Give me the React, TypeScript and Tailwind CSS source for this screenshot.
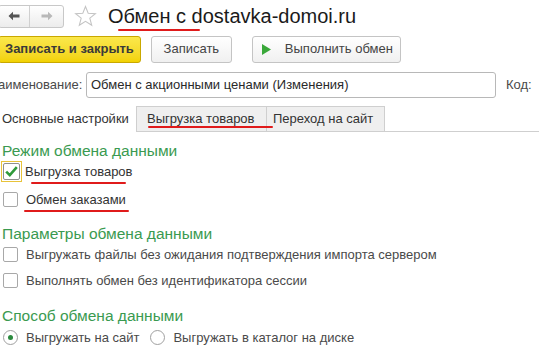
import React from 'react';

const font = { fontFamily: '"Liberation Sans", Arial, sans-serif' };

function Check({ checked }: { checked?: boolean }) {
  if (checked) {
    return (
      <span className="flex h-[21px] w-[21px] items-center justify-center border border-[#e8c33a] bg-white">
        <svg width="17" height="17" viewBox="0 0 17 17">
          <rect x="0.5" y="0.5" width="16" height="16" rx="1.5" fill="white" stroke="#8f8f8f" />
          <path d="M3.2 8.6 L6.8 12.2 L13.8 4.2" fill="none" stroke="#2f9a3a" strokeWidth="2.6" />
        </svg>
      </span>
    );
  }
  return <span className="block h-[15px] w-[15px] rounded-[2px] border border-[#a8a8a8] bg-white" />;
}

function Radio({ on }: { on?: boolean }) {
  return (
    <span className="flex h-[15px] w-[15px] items-center justify-center rounded-full border border-[#a0a0a0] bg-white">
      {on && <span className="h-[5px] w-[5px] rounded-full bg-[#2b8a3e]" />}
    </span>
  );
}

export default function App() {
  return (
    <div className="h-[350px] w-[539px] overflow-hidden bg-white text-[13px] text-[#4a4a4a]" style={font}>
      {/* header */}
      <div className="flex h-[32px] items-center">
        <div className="ml-[-2px] flex h-[23px] items-stretch rounded-[3px] border border-[#c8c8c8] bg-gradient-to-b from-white to-[#ececec]">
          <span className="flex w-[31px] items-center justify-center border-r border-[#d0d0d0]">
            <svg width="12" height="10" viewBox="0 0 12 10">
              <path d="M0.5 5 L5 0.8 V3.6 H11.5 V6.4 H5 V9.2 Z" fill="#555" />
            </svg>
          </span>
          <span className="flex w-[33px] items-center justify-center">
            <svg width="12" height="10" viewBox="0 0 12 10">
              <path d="M11.5 5 L7 0.8 V3.6 H0.5 V6.4 H7 V9.2 Z" fill="#b8b8b8" />
            </svg>
          </span>
        </div>
        <svg className="ml-[10px]" width="23" height="22" viewBox="0 0 24 23">
          <path
            d="M12 1.5 L14.8 8.6 L22.4 9 L16.5 13.8 L18.5 21.2 L12 17 L5.5 21.2 L7.5 13.8 L1.6 9 L9.2 8.6 Z"
            fill="white"
            stroke="#c4c4c4"
            strokeWidth="1.1"
          />
        </svg>
        <div className="relative ml-[11px] text-[20px] leading-none text-[#1a1a1a]">
          Обмен с dostavka-domoi.ru
          <span className="absolute left-[10px] top-[23px] h-[2px] w-[82px] rounded bg-[#e01b1b]" />
        </div>
      </div>

      {/* command bar */}
      <div className="mt-[3px] flex h-[28px] items-center">
        <button className="ml-[-2px] h-[27px] rounded-[3px] border border-[#c9a800] bg-gradient-to-b from-[#fbe84a] to-[#f2d200] px-[6px] text-[13px] font-bold text-[#3a3a3a]">
          Записать и закрыть
        </button>
        <button className="ml-[10px] h-[27px] w-[81px] rounded-[3px] border border-[#c4c4c4] bg-gradient-to-b from-white to-[#f0f0f0] text-[13px] text-[#444]">
          Записать
        </button>
        <button className="ml-[20px] flex h-[27px] w-[149px] items-center rounded-[3px] border border-[#c4c4c4] bg-gradient-to-b from-white to-[#f0f0f0] text-[13px] text-[#444]">
          <svg className="ml-[9px]" width="9" height="11" viewBox="0 0 9 11">
            <path d="M0 0 L9 5.5 L0 11 Z" fill="#3aa83a" />
          </svg>
          <span className="ml-[14px]">Выполнить обмен</span>
        </button>
      </div>

      {/* name row */}
      <div className="mt-[9px] flex h-[26px] items-center">
        <span className="ml-[-2px] w-[88px]">аименование:</span>
        <div className="flex h-[26px] w-[410px] items-center rounded-[3px] border border-[#b8b8b8] px-[4px] text-[#2a2a2a]">
          Обмен с акционными ценами (Изменения)
        </div>
        <span className="ml-[10px]">Код:</span>
      </div>

      {/* tabs */}
      <div className="mt-[8px] flex h-[26px] items-stretch">
        <div className="flex w-[137px] items-center border-r border-[#cfcfcf] bg-white pl-[2px] text-[#333]">Основные настройки</div>
        <div className="relative flex w-[130px] items-center border-b border-r border-t border-[#cfcfcf] bg-[#efefef] pl-[10px] text-[#333]">
          Выгрузка товаров
          <span className="absolute bottom-[3px] left-[11px] h-[2px] w-[125px] rounded bg-[#e01b1b]" />
        </div>
        <div className="flex w-[118px] items-center border-b border-r border-t border-[#cfcfcf] bg-[#efefef] pl-[6px] text-[#333]">
          Переход на сайт
        </div>
        <div className="flex-1 border-b border-[#cfcfcf]" />
      </div>

      {/* section 1 */}
      <div className="mt-[9px] pl-[2px] text-[15.5px] leading-[19px] text-[#3a9a50]">Режим обмена данными</div>
      <div className="mt-[1px] flex h-[21px] items-center gap-[3px] pl-[1px]">
        <Check checked />
        <span className="relative text-[#333]">
          Выгрузка товаров
          <span className="absolute left-[6px] top-[20px] h-[2px] w-[95px] rounded bg-[#e01b1b]" />
        </span>
      </div>
      <div className="mt-[8px] flex h-[19px] items-center gap-[8px] pl-[3px]">
        <Check />
        <span className="relative text-[#333]">
          Обмен заказами
          <span className="absolute left-[-2px] top-[20px] h-[2px] w-[105px] rounded bg-[#e01b1b]" />
        </span>
      </div>

      {/* section 2 */}
      <div className="mt-[15px] pl-[2px] text-[15.5px] leading-[19px] text-[#3a9a50]">Параметры обмена данными</div>
      <div className="mt-[2px] flex h-[19px] items-center gap-[8px] pl-[3px]">
        <Check />
        <span>Выгружать файлы без ожидания подтверждения импорта сервером</span>
      </div>
      <div className="mt-[7px] flex h-[19px] items-center gap-[8px] pl-[3px]">
        <Check />
        <span>Выполнять обмен без идентификатора сессии</span>
      </div>

      {/* section 3 */}
      <div className="mt-[16px] pl-[2px] text-[15.5px] leading-[19px] text-[#3a9a50]">Способ обмена данными</div>
      <div className="mt-[3px] flex h-[19px] items-center pl-[3px]">
        <Radio on />
        <span className="ml-[8px]">Выгружать на сайт</span>
        <span className="ml-[11px]">
          <Radio />
        </span>
        <span className="ml-[8px]">Выгружать в каталог на диске</span>
      </div>
    </div>
  );
}
